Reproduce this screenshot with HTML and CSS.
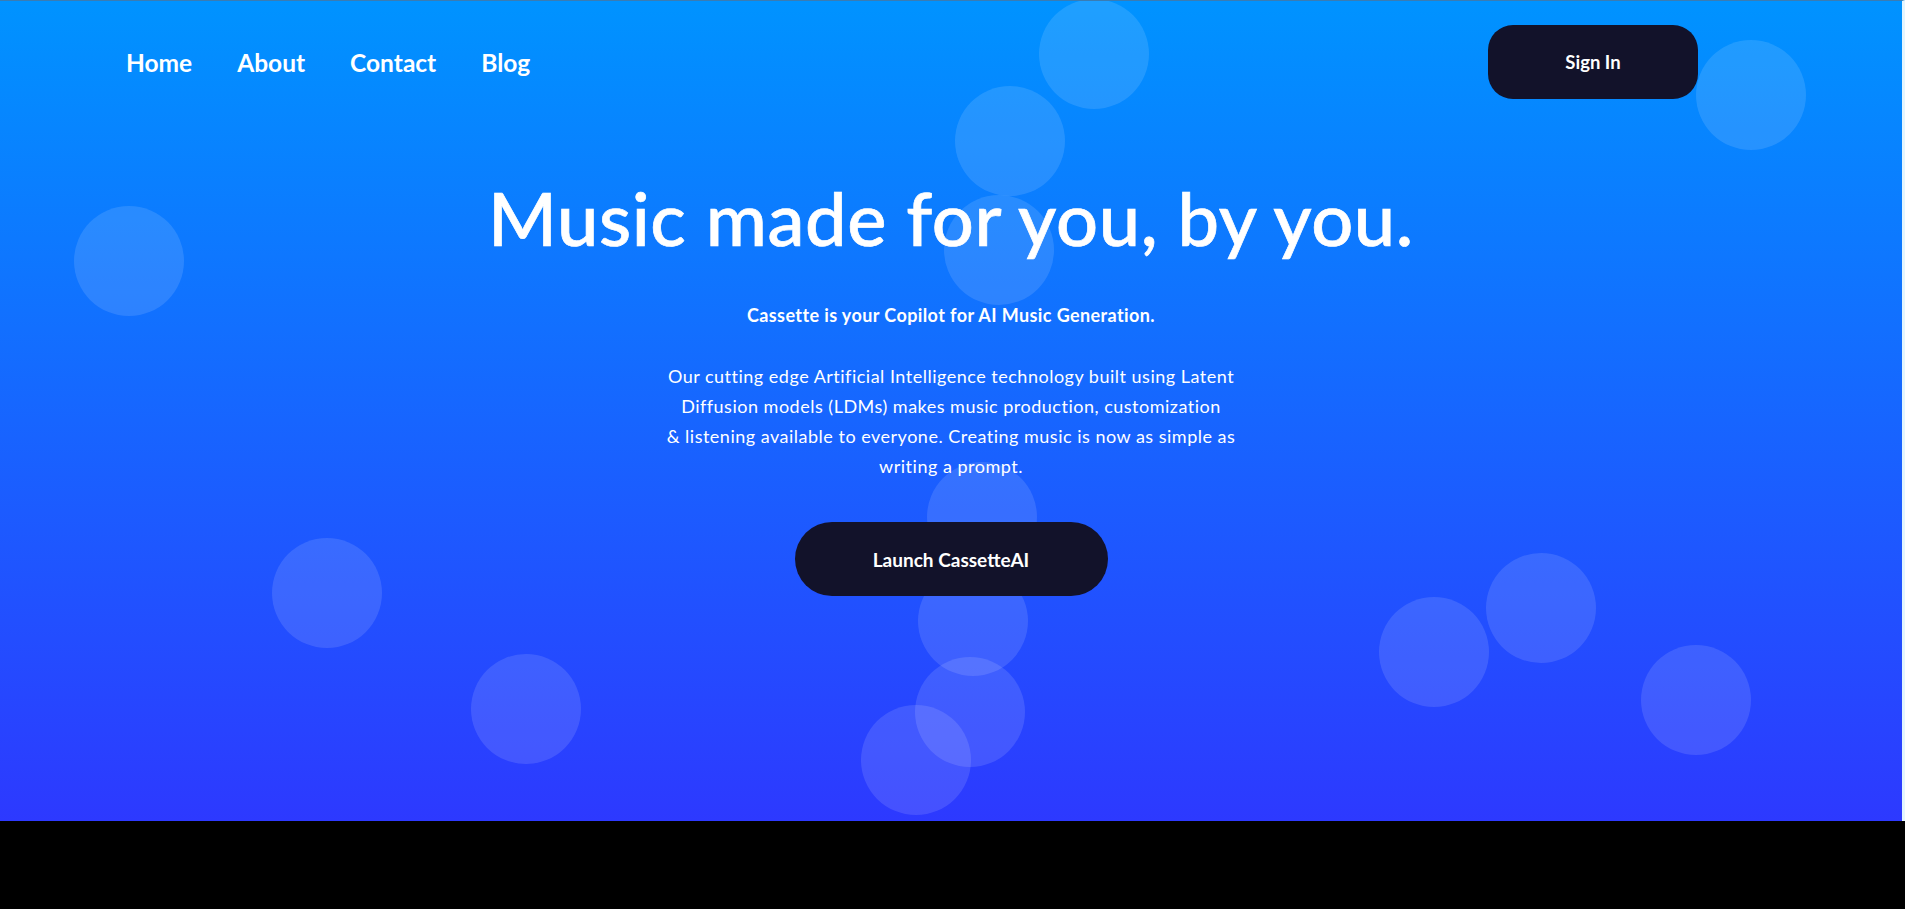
FILE: index.html
```html
<!DOCTYPE html>
<html lang="en">
<head>
<meta charset="utf-8">
<title>CassetteAI</title>
<link rel="stylesheet" href="styles.css">
</head>
<body>
<div class="page">
  <section class="hero">
    <div class="bubbles" aria-hidden="true">
      <span class="bubble" style="left:1094px;top:53px"></span>
      <span class="bubble" style="left:1010px;top:140px"></span>
      <span class="bubble" style="left:999px;top:249px"></span>
      <span class="bubble" style="left:129px;top:260px"></span>
      <span class="bubble" style="left:1751px;top:94px"></span>
      <span class="bubble" style="left:327px;top:592px"></span>
      <span class="bubble" style="left:526px;top:708px"></span>
      <span class="bubble" style="left:982px;top:516px"></span>
      <span class="bubble" style="left:973px;top:620px"></span>
      <span class="bubble" style="left:970px;top:711px"></span>
      <span class="bubble" style="left:916px;top:759px"></span>
      <span class="bubble" style="left:1434px;top:651px"></span>
      <span class="bubble" style="left:1541px;top:607px"></span>
      <span class="bubble" style="left:1696px;top:699px"></span>
    </div>
    <header class="topbar">
      <nav class="nav">
        <a href="#" class="nav-link">Home</a>
        <a href="#" class="nav-link">About</a>
        <a href="#" class="nav-link">Contact</a>
        <a href="#" class="nav-link">Blog</a>
      </nav>
      <a href="#" class="btn btn-signin">Sign In</a>
    </header>
    <main class="content">
      <h1 class="title">Music made for you, by you.</h1>
      <p class="lead">Cassette is your Copilot for AI Music Generation.</p>
      <p class="desc">Our cutting edge Artificial Intelligence technology built using Latent<br>Diffusion models (LDMs) makes music production, customization<br>&amp; listening available to everyone. Creating music is now as simple as<br>writing a prompt.</p>
      <a href="#" class="btn btn-launch">Launch CassetteAI</a>
    </main>
  </section>
  <section class="below"></section>
</div>
</body>
</html>
```
FILE: styles.css
```css
* { box-sizing: border-box; }
html, body { margin: 0; padding: 0; }
body {
  background: #000;
  font-family: "Lato", "Liberation Sans", sans-serif;
  color: #fff;
}
.page { width: 100%; }
.hero {
  position: relative;
  height: 821px;
  overflow: hidden;
  background: linear-gradient(180deg, #0093ff 0%, #2d39ff 100%);
  border-top: 1px solid #3a7cb2;
  border-right: 3px solid #e3f5ff;
}
.bubbles { position: absolute; inset: 0; z-index: 0; }
.bubble {
  position: absolute;
  width: 110px;
  height: 110px;
  margin: -55px 0 0 -55px;
  border-radius: 50%;
  background: rgba(255,255,255,0.12);
}
.topbar {
  position: relative;
  z-index: 1;
  display: flex;
  align-items: center;
  justify-content: space-between;
  padding: 24px 204px 0 126px;
}
.nav { display: flex; gap: 45px; }
.nav-link {
  color: #fff;
  text-decoration: none;
  font-size: 24.5px;
  font-weight: 700;
}
.btn {
  display: flex;
  align-items: center;
  justify-content: center;
  background: #12122a;
  color: #fff;
  text-decoration: none;
  font-weight: 700;
}
.btn-signin {
  width: 210px;
  height: 74px;
  border-radius: 25px;
  font-size: 18.5px;
}
.content {
  position: relative;
  z-index: 1;
  display: flex;
  flex-direction: column;
  align-items: center;
  text-align: center;
}
.title {
  margin: 77px 0 0;
  font-size: 74px;
  line-height: 84px;
  font-weight: 500;
  letter-spacing: 0.6px;
  -webkit-text-stroke: 0.7px #fff;
}
.lead {
  margin: 43px 0 0;
  font-size: 18px;
  line-height: 24px;
  font-weight: 700;
  letter-spacing: 0.4px;
}
.desc {
  margin: 34px 0 0;
  font-size: 18px;
  line-height: 30px;
  font-weight: 400;
  letter-spacing: 0.5px;
}
.btn-launch {
  margin-top: 41px;
  width: 313px;
  height: 74px;
  border-radius: 37px;
  font-size: 19px;
}
.below { height: 88px; background: #000; }
```
